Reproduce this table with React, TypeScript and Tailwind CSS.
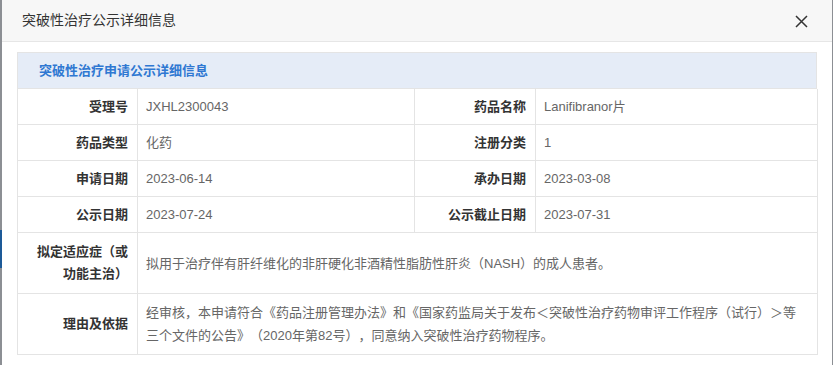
import React from "react";

const font = { fontFamily: '"Liberation Sans", "Noto Sans CJK SC", sans-serif' };

function Label({ children, className = "" }: { children: React.ReactNode; className?: string }) {
  return (
    <div
      className={`flex items-center justify-end text-right border-r border-b border-[#e4e4e4] pl-[10px] pr-[9px] text-[13px] leading-[22px] font-bold text-[#333] ${className}`}
    >
      {children}
    </div>
  );
}

function Value({ children, className = "" }: { children: React.ReactNode; className?: string }) {
  return (
    <div
      className={`flex items-center border-r border-b border-[#e4e4e4] pl-[8px] pr-[8px] text-[13px] text-[#666] ${className}`}
    >
      {children}
    </div>
  );
}

export default function App() {
  return (
    <div
      className="w-[833px] h-[365px] overflow-hidden flex bg-[#8c8f94] [text-spacing-trim:space-all]"
      style={font}
    >
      <div className="w-[2px] flex flex-col">
        <div className="h-[230px] bg-[#8c8f94]" />
        <div className="h-[38px] bg-[#1d5a98]" />
        <div className="flex-1 bg-[#8c8f94]" />
      </div>
      <div className="w-[830px] bg-white flex flex-col">
        <div className="h-[42px] bg-[#f7f7f7] border-b border-[#e6e6e6] flex items-center justify-between pl-[20px] pr-[24px]">
          <span className="text-[14px] text-[#333]">突破性治疗公示详细信息</span>
          <svg width="13" height="13" viewBox="0 0 13 13" className="mt-[2px]">
            <path d="M1 1 L12 12 M12 1 L1 12" stroke="#333" strokeWidth="1.5" />
          </svg>
        </div>
        <div className="pt-[10px] pl-[15px]">
          <div className="w-[800px] border-l border-t border-[#e4e4e4]">
            <div className="h-[36px] bg-[#e5ecf7] border-r border-b border-[#e4e4e4] flex items-center pl-[21px] text-[13px] font-bold text-[#2f78d2]">
              突破性治疗申请公示详细信息
            </div>
            <div className="grid grid-cols-[120px_277px_121px_282px]">
              <Label className="h-[36px]">受理号</Label>
              <Value className="h-[36px]">JXHL2300043</Value>
              <Label className="h-[36px]">药品名称</Label>
              <Value className="h-[36px]">Lanifibranor片</Value>

              <Label className="h-[36px]">药品类型</Label>
              <Value className="h-[36px]">化药</Value>
              <Label className="h-[36px]">注册分类</Label>
              <Value className="h-[36px]">1</Value>

              <Label className="h-[36px]">申请日期</Label>
              <Value className="h-[36px]">2023-06-14</Value>
              <Label className="h-[36px]">承办日期</Label>
              <Value className="h-[36px]">2023-03-08</Value>

              <Label className="h-[36px]">公示日期</Label>
              <Value className="h-[36px]">2023-07-24</Value>
              <Label className="h-[36px]">公示截止日期</Label>
              <Value className="h-[36px]">2023-07-31</Value>

              <Label className="h-[61px]">拟定适应症（或功能主治）</Label>
              <Value className="h-[61px] col-span-3 leading-[23px]">
                拟用于治疗伴有肝纤维化的非肝硬化非酒精性脂肪性肝炎（NASH）的成人患者。
              </Value>

              <Label className="h-[61px]">理由及依据</Label>
              <Value className="h-[61px] col-span-3 leading-[23px]">
                <span className="whitespace-nowrap">
                  经审核，本申请符合《药品注册管理办法》和《国家药监局关于发布＜突破性治疗药物审评工作程序（试行）＞等
                  <br />
                  三个文件的公告》（2020年第82号），同意纳入突破性治疗药物程序。
                </span>
              </Value>
            </div>
          </div>
        </div>
      </div>
      <div className="w-[1px] bg-[#8c8f94]" />
    </div>
  );
}
